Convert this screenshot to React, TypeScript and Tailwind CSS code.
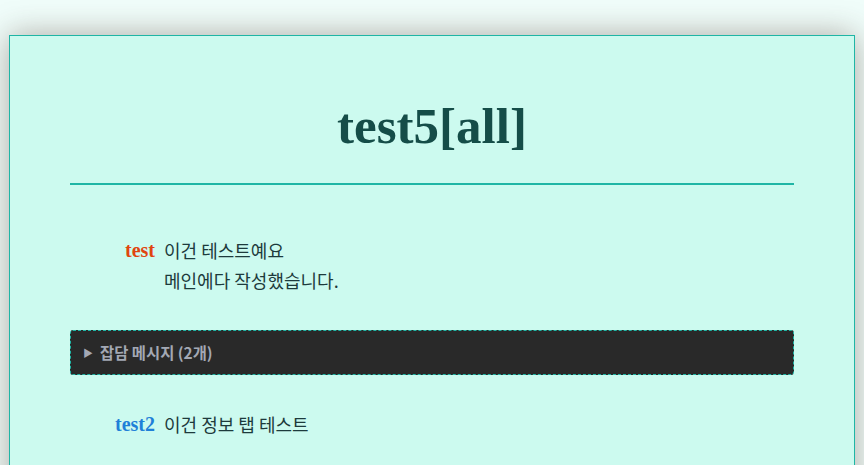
import React from 'react'

const serif = "font-['Liberation_Serif','Noto_Sans_CJK_KR',serif]"
const sans = "font-['Noto_Sans_CJK_KR','Noto_Sans',sans-serif]"

const MESSAGES = [
  { name: 'test', color: 'text-[#e0450f]', lines: ['이건 테스트예요', '메인에다 작성했습니다.'] },
]

function Message({ name, color, lines }: { name: string; color: string; lines: string[] }) {
  return (
    <div className="flex items-start pl-[38px]">
      <div className={`w-[47px] shrink-0 text-right text-[20px] font-bold leading-[30px] ${color} ${serif}`}>{name}</div>
      <div className={`pl-[9px] text-[18px] leading-[30px] text-[#1d3a3c] ${sans}`}>
        {lines.map((l) => (
          <div key={l}>{l}</div>
        ))}
      </div>
    </div>
  )
}

export default function App() {
  return (
    <div className="min-h-screen overflow-hidden bg-[#f0fdfa] px-[9px] pt-[35px]">
      {/* Card */}
      <div className="min-h-[500px] border border-[#1fb5a5] bg-[#ccfaef] px-[60px] shadow-[0_0_30px_rgba(70,45,35,0.4)]">
        <h1 className={`pt-[58px] pb-[25px] text-center text-[51px] font-bold leading-[64px] text-[#154d48] ${serif}`}>
          test5[all]
        </h1>
        <hr className="border-0 border-t-2 border-[#1fb5a5]" />

        <div className="pt-[50px]">
          {MESSAGES.map((m) => (
            <Message key={m.name} {...m} />
          ))}
        </div>

        {/* Chatter */}
        <details className="mt-[35px] rounded-[3px] border border-dashed border-[#1fb5a5] bg-[#292929]">
          <summary className={`flex h-[43px] cursor-pointer list-none items-center gap-[7px] pl-[12px] text-[15.4px] font-bold text-[#a3a8b4] ${sans}`}>
            <span className="text-[10px]">▶</span>
            잡담 메시지 (2개)
          </summary>
        </details>

        <div className="pt-[34px]">
          <div className="flex items-start pl-[38px]">
            <div className={`w-[47px] shrink-0 text-right text-[20px] font-bold leading-[30px] text-[#1f80d8] ${serif}`}>test2</div>
            <div className={`pl-[9px] text-[18px] leading-[30px] text-[#1d3a3c] ${sans}`}>이건 정보 탭 테스트</div>
          </div>
        </div>
      </div>
    </div>
  )
}
